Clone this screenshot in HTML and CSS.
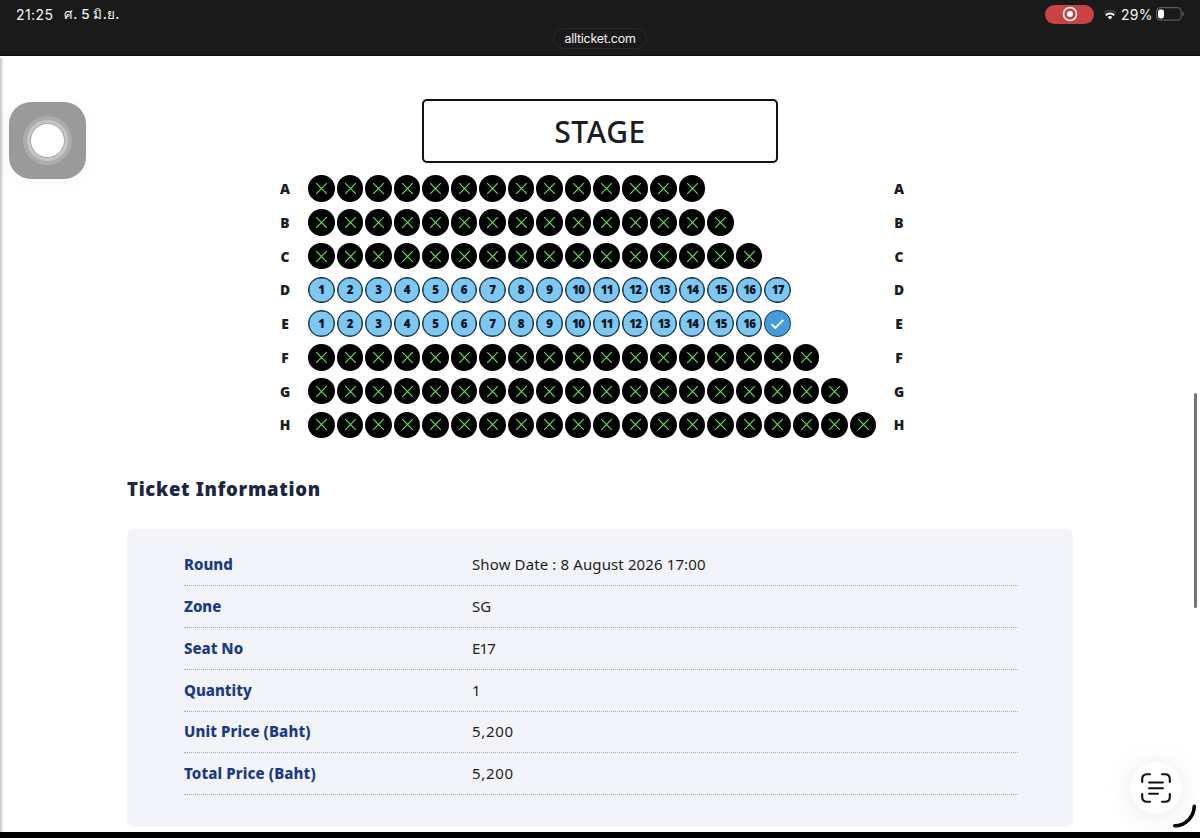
FILE: index.html
```html
<!DOCTYPE html>
<html lang="en">
<head>
    <meta charset="UTF-8">
    <meta name="viewport" content="width=device-width, initial-scale=1.0">
    <title>allticket.com</title>
    <link rel="stylesheet" href="styles.css">
</head>
<body>
<div class="screen">
    <header class="browser-bar">
        <div class="status">
            <div class="status-left">
                <span class="clock">21:25</span>
                <span class="date">ศ. 5 มิ.ย.</span>
            </div>
            <div class="status-right">
                <span class="recording">
                    <svg width="16" height="16" viewBox="0 0 16 16">
                        <circle cx="8" cy="8" r="6.5" fill="none" stroke="#fff" stroke-width="1.6"/>
                        <circle cx="8" cy="8" r="3" fill="#fff"/>
                    </svg>
                </span>
                <svg class="wifi" width="14" height="11" viewBox="0 0 14 11">
                    <path d="M0.8 4 A9 9 0 0 1 13.2 4" fill="none" stroke="#4a4a4a" stroke-width="1.6"/>
                    <path d="M2.8 6.2 A6 6 0 0 1 11.2 6.2" fill="none" stroke="#fff" stroke-width="1.9"/>
                    <path d="M4.6 8.1 A3.5 3.5 0 0 1 9.4 8.1 L7 10.4 Z" fill="#fff"/>
                </svg>
                <span class="percent">29%</span>
                <svg class="battery" width="29" height="14" viewBox="0 0 29 14">
                    <rect x="0.6" y="0.6" width="24.6" height="12.6" rx="4" fill="none" stroke="#5c5c5c" stroke-width="1.2"/>
                    <rect x="2" y="2.4" width="6" height="9" rx="2.3" fill="#fff"/>
                    <path d="M26.5 4.8 Q28.3 5.6 28.3 7 Q28.3 8.4 26.5 9.2 Z" fill="#5c5c5c"/>
                </svg>
            </div>
        </div>
        <div class="address">allticket.com</div>
    </header>

    <main class="page">
        <div class="stage">STAGE</div>
        <div id="seatMap" class="seat-map">
            <!-- Rows will be populated by JavaScript -->
        </div>

        <h2 class="info-title">Ticket Information</h2>
        <dl class="info">
            <div class="info-row"><dt>Round</dt><dd>Show Date : 8 August 2026 17:00</dd></div>
            <div class="info-row"><dt>Zone</dt><dd>SG</dd></div>
            <div class="info-row"><dt>Seat No</dt><dd class="tight">E17</dd></div>
            <div class="info-row"><dt>Quantity</dt><dd>1</dd></div>
            <div class="info-row"><dt class="price">Unit Price (Baht)</dt><dd class="amount">5,200</dd></div>
            <div class="info-row"><dt class="price">Total Price (Baht)</dt><dd class="amount">5,200</dd></div>
        </dl>
    </main>

    <div class="edge-shadow"></div>
    <div class="assistive-touch"><span></span></div>
    <div class="scrollbar"></div>
    <div class="scan-button">
        <svg width="30" height="30" viewBox="0 0 30 30" fill="none" stroke="#111" stroke-width="2.1" stroke-linecap="round">
            <path d="M1.2 9 V6 Q1.2 1.2 6 1.2 H9 M21 1.2 H24 Q28.8 1.2 28.8 6 V9 M28.8 21 V24 Q28.8 28.8 24 28.8 H21 M9 28.8 H6 Q1.2 28.8 1.2 24 V21"/>
            <path d="M8 9.5 H22 M8 15.2 H22 M8 20.8 H17" stroke-width="1.9"/>
        </svg>
    </div>
    <svg class="corner-mark" width="26" height="26" viewBox="0 0 26 26">
        <path d="M2.8 22.8 C13.5 22.5 22 14 22.3 3.3" fill="none" stroke="#000" stroke-width="3.6" stroke-linecap="round"/>
    </svg>
    <div class="bottom-bar"></div>
</div>
<script>
    const rows = [
        { name: 'A', seats: 14 },
        { name: 'B', seats: 15 },
        { name: 'C', seats: 16 },
        { name: 'D', seats: 17, open: true },
        { name: 'E', seats: 17, open: true, selected: 17 },
        { name: 'F', seats: 18 },
        { name: 'G', seats: 19 },
        { name: 'H', seats: 20 }
    ];
    const cross = '<svg width="13" height="13" viewBox="0 0 13 13"><path d="M1.2 1.2 L11.8 11.8 M11.8 1.2 L1.2 11.8" stroke="#6be04b" stroke-width="1.15"/></svg>';
    const check = '<svg width="15" height="12" viewBox="0 0 15 12"><path d="M1.5 6.2 L5.3 10 L13.3 1.8" fill="none" stroke="#fff" stroke-width="1.9"/></svg>';

    function seatHtml(row, number) {
        if (!row.open) {
            return `<span class="seat sold">${cross}</span>`;
        }
        if (row.selected === number) {
            return `<span class="seat selected">${check}</span>`;
        }
        return `<span class="seat open${number > 9 ? ' wide' : ''}">${number}</span>`;
    }

    const seatMap = document.getElementById('seatMap');
    rows.forEach(row => {
        let seats = '';
        for (let i = 1; i <= row.seats; i++) {
            seats += seatHtml(row, i);
        }
        const div = document.createElement('div');
        div.className = 'seat-row';
        div.innerHTML = `<b>${row.name}</b><div class="seats">${seats}</div><b>${row.name}</b>`;
        seatMap.appendChild(div);
    });
</script>
</body>
</html>
```
FILE: styles.css
```css
* {
    box-sizing: border-box;
}
body {
    margin: 0;
    background: #fff;
    color: #1b1d21;
    font-family: "Noto Sans", "Open Sans", sans-serif;
}
.screen {
    position: relative;
    width: 1200px;
    height: 838px;
    overflow: hidden;
}

/* status bar and address */
.browser-bar {
    display: flex;
    flex-direction: column;
    align-items: center;
    height: 56px;
    background: #1a1a1a;
    border-bottom: 1px solid #0d0d0d;
    color: #f5f5f5;
    font-family: Inter, "Noto Sans", sans-serif;
}
.status {
    display: flex;
    justify-content: space-between;
    align-items: center;
    width: 100%;
    height: 28px;
    padding: 0 15px 0 16px;
    font-size: 14px;
}
.status-left, .status-right {
    display: flex;
    align-items: center;
}
.clock {
    width: 48px;
    letter-spacing: 0.4px;
}
.date {
    font-size: 13.5px;
    font-weight: 500;
    letter-spacing: 0.2px;
}
.recording {
    display: flex;
    align-items: center;
    justify-content: center;
    width: 49px;
    height: 19px;
    margin-right: 9px;
    border-radius: 10px;
    background: #cb4244;
}
.percent {
    width: 40px;
    padding-left: 4px;
    letter-spacing: 0.3px;
}
.battery {
    margin-left: -1px;
}
.address {
    height: 21px;
    padding: 0 10.5px;
    border: 1px solid #292929;
    border-radius: 11px;
    font-size: 12.4px;
    line-height: 19px;
    letter-spacing: -0.22px;
}

/* seat map */
.page {
    width: 946px;
    margin: 0 auto;
    padding-top: 43px;
}
.stage {
    width: 356px;
    height: 64px;
    margin: 0 auto;
    border: 2px solid #111;
    border-radius: 5px;
    font-size: 30px;
    font-weight: 500;
    line-height: 61px;
    letter-spacing: 0.5px;
    text-align: center;
}
.seat-map {
    width: 642px;
    margin: 8.75px 0 0 144px;
}
.seat-row {
    display: flex;
    align-items: center;
    height: 33.75px;
}
.seat-row b {
    width: 28px;
    font-size: 13.8px;
    font-weight: 900;
    text-align: center;
}
.seats {
    display: flex;
    flex: 1;
    gap: 2px;
    padding-left: 9.4px;
}
.seat {
    display: flex;
    align-items: center;
    justify-content: center;
    width: 26.5px;
    height: 26.5px;
    border-radius: 50%;
}
.sold {
    background: #000;
}
.open {
    border: 1.5px solid #0c2334;
    background: #7cc8f2;
    box-shadow: inset 0 0 0 0.4px #0c2334;
    color: #06121f;
    font-size: 11.5px;
    font-weight: 900;
}
.wide {
    letter-spacing: -0.8px;
}
.selected {
    border: 1.5px solid #17344f;
    background: #469bdb;
}

/* ticket details */
.info-title {
    margin: 34.25px 0 0;
    color: #1b2641;
    font-size: 18.5px;
    font-weight: 900;
    line-height: 26px;
    letter-spacing: 0.7px;
}
.info {
    height: 298px;
    margin: 27px 0 0;
    padding: 15.5px 55px 0 57px;
    border-radius: 7px;
    background: #f3f4f9;
}
.info-row {
    display: flex;
    align-items: center;
    height: 41.75px;
    padding-bottom: 1px;
    border-bottom: 1px dotted #a6a8af;
    font-size: 15px;
}
.info-row dt {
    width: 288px;
    color: #1a3a85;
    font-weight: 800;
}
.info-row .price {
    letter-spacing: 0.12px;
}
.info-row dd {
    margin: 0;
    letter-spacing: 0.12px;
}
.info-row .tight {
    letter-spacing: -0.8px;
}
.info-row .amount {
    letter-spacing: 0.7px;
}

/* floating controls */
.edge-shadow {
    position: absolute;
    top: 58px;
    left: 0;
    width: 4px;
    height: 774px;
    background: linear-gradient(to right, #c4c4c4, #fff);
}
.assistive-touch {
    position: absolute;
    top: 102px;
    left: 9px;
    display: flex;
    align-items: center;
    justify-content: center;
    width: 77px;
    height: 77px;
    border-radius: 22px;
    background: #9a9a9a;
    box-shadow: 0 4px 20px rgba(0, 0, 0, 0.03);
}
.assistive-touch span {
    width: 33px;
    height: 33px;
    border-radius: 50%;
    background: #fff;
    box-shadow: 0 0 0 1px #aaa, 0 0 0 4px #c6c6c6, 0 0 0 8px #acacac;
}
.scrollbar {
    position: absolute;
    top: 393px;
    left: 1194px;
    width: 3px;
    height: 215px;
    border-radius: 2px;
    background: #747474;
}
.scan-button {
    position: absolute;
    top: 762px;
    left: 1130px;
    display: flex;
    align-items: center;
    justify-content: center;
    width: 52px;
    height: 52px;
    border-radius: 50%;
    background: #fff;
    box-shadow: 0 2px 30px rgba(0, 0, 0, 0.09);
}
.corner-mark {
    position: absolute;
    top: 803px;
    left: 1172px;
}
.bottom-bar {
    position: absolute;
    bottom: 0;
    left: 0;
    width: 100%;
    height: 6px;
    background: #000;
}
```
